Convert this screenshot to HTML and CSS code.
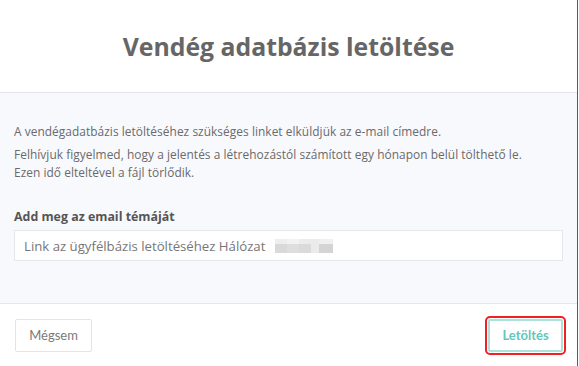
FILE: index.html
```html
<!DOCTYPE html>
<html lang="hu">
<head>
<meta charset="utf-8">
<title>Vendég adatbázis letöltése</title>
<link rel="stylesheet" href="styles.css">
</head>
<body>
<div class="modal">
  <header class="modal-header">
    <h1 class="modal-title">Vendég adatbázis letöltése</h1>
  </header>
  <section class="modal-body">
    <p class="info">A vendégadatbázis letöltéséhez szükséges linket elküldjük az e-mail címedre.</p>
    <p class="info">Felhívjuk figyelmed, hogy a jelentés a létrehozástól számított egy hónapon belül tölthető le.<br>Ezen idő elteltével a fájl törlődik.</p>
    <label class="field-label">Add meg az email témáját</label>
    <div class="input">Link az ügyfélbázis letöltéséhez Hálózat <span class="blur"><i></i><i></i><i></i><i></i><i></i></span></div>
  </section>
  <footer class="modal-footer">
    <button class="btn btn-cancel">Mégsem</button>
    <button class="btn btn-primary">Letöltés</button>
  </footer>
</div>
</body>
</html>
```
FILE: styles.css
```css
html, body {
  margin: 0;
  padding: 0;
  background: #ffffff;
}
body {
  font-family: "Open Sans", "Noto Sans", sans-serif;
  width: 579px;
  height: 366px;
  overflow: hidden;
}
.modal {
  width: 577px;
  border-right: 1px solid #5a5a5a;
  height: 366px;
  display: flex;
  flex-direction: column;
  background: #fff;
}
.modal-header {
  height: 92px;
  border-bottom: 1px solid #e3e4e8;
  display: flex;
  align-items: center;
  justify-content: center;
}
.modal-title {
  margin: 0;
  font-size: 24.8px;
  font-weight: 700;
  color: #666666;
  padding-top: 0;
}
.modal-body {
  background: #f8f9fd;
  height: 181px;
  padding: 29px 14px 0 14px;
  border-bottom: 1px solid #e6e7ea;
}
.info {
  margin: 0 0 5px 0;
  font-size: 11.9px;
  line-height: 18px;
  color: #6a6a6a;
  letter-spacing: 0.05px;
}
.field-label {
  display: block;
  margin-top: 27px;
  font-size: 12.4px;
  font-weight: 700;
  color: #555555;
  line-height: 18px;
}
.input {
  margin-top: 4px;
  width: 549px;
  height: 31px;
  box-sizing: border-box;
  background: #ffffff;
  border: 1px solid #e6e7ea;
  padding: 6px 0 0 9px;
  font-size: 13.2px;
  color: #777777;
  line-height: 18px;
}
.blur {
  display: inline-flex;
  vertical-align: middle;
  height: 14px;
  margin-left: 6px;
  margin-top: -2px;
}
.blur i {
  display: block;
  height: 14px;
  width: 12px;
  background: linear-gradient(#eeeeee 0 35%, #d9d9d9 35% 100%);
}
.blur i:nth-child(2) { background: linear-gradient(#f2f2f2 0 35%, #dedede 35% 100%); }
.blur i:nth-child(3) { background: linear-gradient(#ececec 0 35%, #dadada 35% 100%); }
.blur i:nth-child(4) { background: #ebebeb; width: 8px; }
.blur i:nth-child(5) { background: linear-gradient(#f0f0f0 0 35%, #d4d4d4 35% 100%); width: 14px; }
.modal-footer {
  flex: 1;
  display: flex;
  justify-content: space-between;
  align-items: center;
  padding: 0 14px 0 15px;
}
.btn {
  font-family: "Lato", "Open Sans", sans-serif;
  font-size: 13px;
  height: 33px;
  background: #ffffff;
  cursor: pointer;
  margin: 0;
}
.btn-cancel {
  width: 77px;
  border: 1px solid #e4e4e4;
  color: #7a7a7a;
  border-radius: 2px;
}
.btn-primary {
  width: 75px;
  border: 2px solid #ade2dc;
  color: #62c7bc;
  font-weight: 700;
  border-radius: 2px;
  outline: 2px solid #ee2222;
  outline-offset: 1px;
}
```
